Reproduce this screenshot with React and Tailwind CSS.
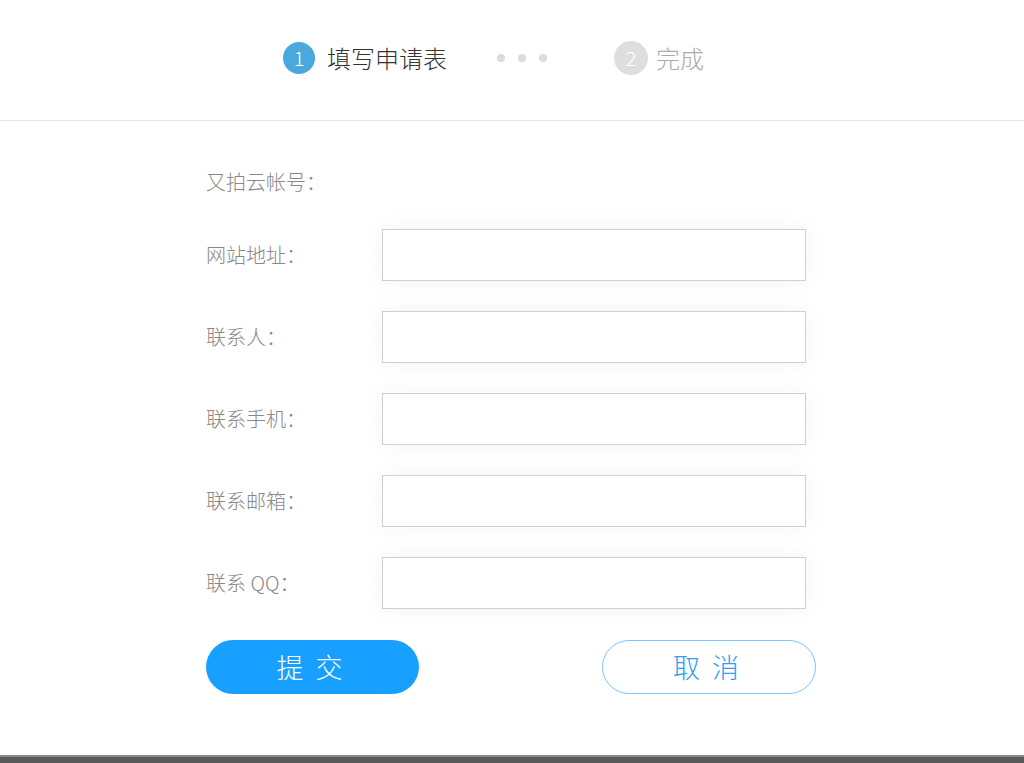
const rows = ['网站地址：', '联系人：', '联系手机：', '联系邮箱：', '联系 QQ：']

const font = { fontFamily: '"Noto Sans CJK SC", "Liberation Sans", sans-serif' }

export default function App() {
  return (
    <div className="flex h-[763px] w-[1024px] flex-col bg-white font-light" style={font}>
      <header className="flex h-[121px] shrink-0 items-center border-b border-[#e6e6e6] pb-[5px] pl-[283px]">
        <div className="flex items-center gap-[12px]">
          <span className="flex h-[32px] w-[32px] items-center justify-center rounded-full bg-[#4aa8dd] text-[20px] font-light text-white">1</span>
          <span className="text-[24px] text-[#333]">填写申请表</span>
        </div>
        <div className="ml-[50px] mr-[67px] flex items-center gap-[13px]">
          <span className="h-[8px] w-[8px] rounded-full bg-[#dcdcdc]" />
          <span className="h-[8px] w-[8px] rounded-full bg-[#dcdcdc]" />
          <span className="h-[8px] w-[8px] rounded-full bg-[#dcdcdc]" />
        </div>
        <div className="flex items-center gap-[8px]">
          <span className="flex h-[34px] w-[34px] items-center justify-center rounded-full bg-[#dedede] text-[20px] font-light text-white">2</span>
          <span className="text-[24px] text-[#aaa]">完成</span>
        </div>
      </header>

      <main className="flex flex-1 flex-col pl-[206px]">
        <div className="mt-[46px] flex h-[30px] items-center text-[20px] text-[#888]">又拍云帐号：</div>
        <div className="mt-[32px] flex flex-col gap-[30px]">
          {rows.map((r) => (
            <div key={r} className="flex items-center">
              <label className="w-[176px] text-[20px] text-[#888]">{r}</label>
              <input className="h-[52px] w-[424px] border border-[#cfcfcf] bg-white shadow-[0_0_24px_rgba(0,0,0,0.05)] outline-none" />
            </div>
          ))}
        </div>
        <div className="mt-[31px] flex items-center">
          <button className="flex h-[54px] w-[213px] items-center justify-center rounded-full bg-[#17a0ff] pl-[6px] text-[27px] tracking-[12px] text-white">
            提交
          </button>
          <button className="ml-[183px] flex h-[54px] w-[214px] items-center justify-center rounded-full border border-[#7cc4ff] bg-white pl-[6px] text-[27px] tracking-[12px] text-[#2aa0f5]">
            取消
          </button>
        </div>
      </main>

      <footer className="h-[8px] shrink-0 border-t-2 border-[#8a8a8a] bg-[#595959]" />
    </div>
  )
}
